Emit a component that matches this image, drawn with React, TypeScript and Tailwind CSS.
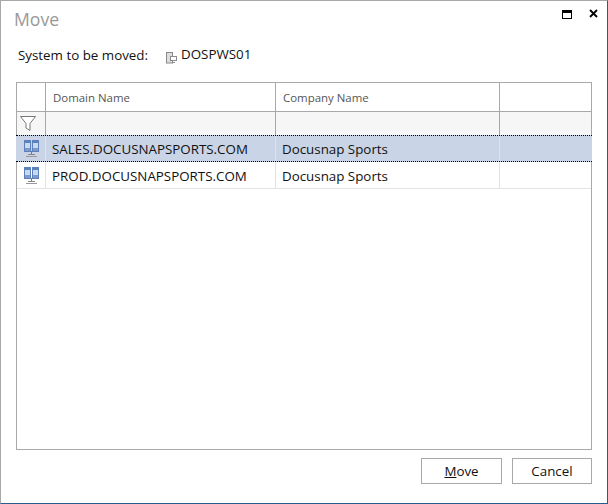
const font = "font-['Open_Sans','Noto_Sans',sans-serif]"

function SystemIcon() {
	return (
		<svg width="15" height="17" viewBox="0 0 15 17" className="shrink-0">
			<rect x="0.5" y="0.5" width="6" height="11" fill="#c9d9f0" stroke="#5b82bd" />
			<rect x="8.5" y="0.5" width="6" height="11" fill="#c9d9f0" stroke="#5b82bd" />
			<rect x="1" y="1" width="5" height="2" fill="#5b82bd" />
			<rect x="9" y="1" width="5" height="2" fill="#5b82bd" />
			<rect x="1" y="8" width="5" height="3" fill="#7d9bca" />
			<rect x="9" y="8" width="5" height="3" fill="#7d9bca" />
			<path d="M7.5 11v4" stroke="#777" fill="none" />
			<path d="M4 14.5h7" stroke="#888" fill="none" />
			<path d="M2 16.5h11" stroke="#999" fill="none" />
		</svg>
	)
}

function FilterIcon() {
	return (
		<svg width="16" height="15" viewBox="0 0 16 15">
			<path d="M0.5 0.5h15L10 7.5v7l-4-2.5V7.5z" fill="#fff" stroke="#777" />
		</svg>
	)
}

function PcIcon() {
	return (
		<svg width="11" height="12" viewBox="0 0 11 12" className="block">
			<rect x="0.5" y="0.5" width="6" height="10.5" fill="#ddd" stroke="#8a8a8a" />
			<rect x="4.5" y="4.5" width="6" height="4" fill="#fff" stroke="#8a8a8a" />
			<path d="M6 10.5h3" stroke="#8a8a8a" />
		</svg>
	)
}

function Row({ name, selected }: { name: string; selected?: boolean }) {
	return (
		<div
			className={
				selected
					? "flex h-[27px] -mx-px px-px bg-[#c9d5e6] border-y border-dotted border-black"
					: "flex h-[27px] border-b border-[#e3e3e3]"
			}
		>
			<div className="w-[29px] shrink-0 flex items-center justify-center border-r border-[#e3e3e3]">
				<SystemIcon />
			</div>
			<div className="w-[230px] shrink-0 pl-[6px] pt-[2px] flex items-center text-[13.35px] border-r border-[#e3e3e3]">{name}</div>
			<div className="w-[224px] shrink-0 pl-[6px] pt-[2px] flex items-center text-[13.35px] border-r border-[#e3e3e3]">Docusnap Sports</div>
			<div className="flex-1" />
		</div>
	)
}

export default function App() {
	return (
		<div className={`${font} w-[608px] h-[504px] bg-white flex flex-col border border-t-[#a8a8a8] border-l-[#a8a8a8] border-r-[#2b5a8c] border-b-[#2b5a8c] text-[#111] overflow-hidden`}>
			<div className="flex h-[38px] shrink-0">
				<div className="pl-[13px] pt-[6px] text-[17.6px] leading-6 text-[#999]">Move</div>
				<div className="ml-auto flex gap-[17px] pr-[9px] pt-[8px]">
					<div className="w-[10px] h-[9px] mt-px border border-black border-t-[3px]" />
					<svg width="9" height="9" viewBox="0 0 9 9">
						<path d="M1 1l7 7M8 1l-7 7" stroke="#000" strokeWidth="1.8" fill="none" />
					</svg>
				</div>
			</div>

			<div className="flex items-center h-[30px] pl-[17px] pt-[2px] text-[13.35px] shrink-0">
				<span>System to be moved:</span>
				<span className="ml-[18px] mt-[5px]">
					<PcIcon />
				</span>
				<span className="ml-[4px] -mt-[1px]">DOSPWS01</span>
			</div>

			<div className="mt-[13px] mx-[15px] h-[368px] border border-[#a8a8a8] flex flex-col shrink-0">
				<div className="flex h-[29px] shrink-0 border-b border-[#a8a8a8] text-[11.45px] text-[#555]">
					<div className="w-[29px] shrink-0 border-r border-[#a8a8a8]" />
					<div className="w-[230px] shrink-0 pl-[7px] pt-[2px] flex items-center border-r border-[#a8a8a8]">Domain Name</div>
					<div className="w-[224px] shrink-0 pl-[7px] pt-[2px] flex items-center border-r border-[#a8a8a8]">Company Name</div>
					<div className="flex-1" />
				</div>
				<div className="flex h-[23px] shrink-0 bg-[#f6f6f6]">
					<div className="w-[29px] shrink-0 flex items-center pl-[3px] border-r border-[#a8a8a8]">
						<FilterIcon />
					</div>
					<div className="w-[230px] shrink-0 border-r border-[#a8a8a8]" />
					<div className="w-[224px] shrink-0 border-r border-[#a8a8a8]" />
					<div className="flex-1" />
				</div>
				<Row name="SALES.DOCUSNAPSPORTS.COM" selected />
				<Row name="PROD.DOCUSNAPSPORTS.COM" />
			</div>

			<div className="flex justify-end gap-[10px] mt-[8px] pr-[15px]">
				<button className="w-[81px] h-[26px] pt-px border border-[#a8a8a8] text-[13.35px] bg-white">
					<span className="underline">M</span>ove
				</button>
				<button className="w-[80px] h-[26px] pt-px border border-[#a8a8a8] text-[13.35px] bg-white">Cancel</button>
			</div>
		</div>
	)
}
